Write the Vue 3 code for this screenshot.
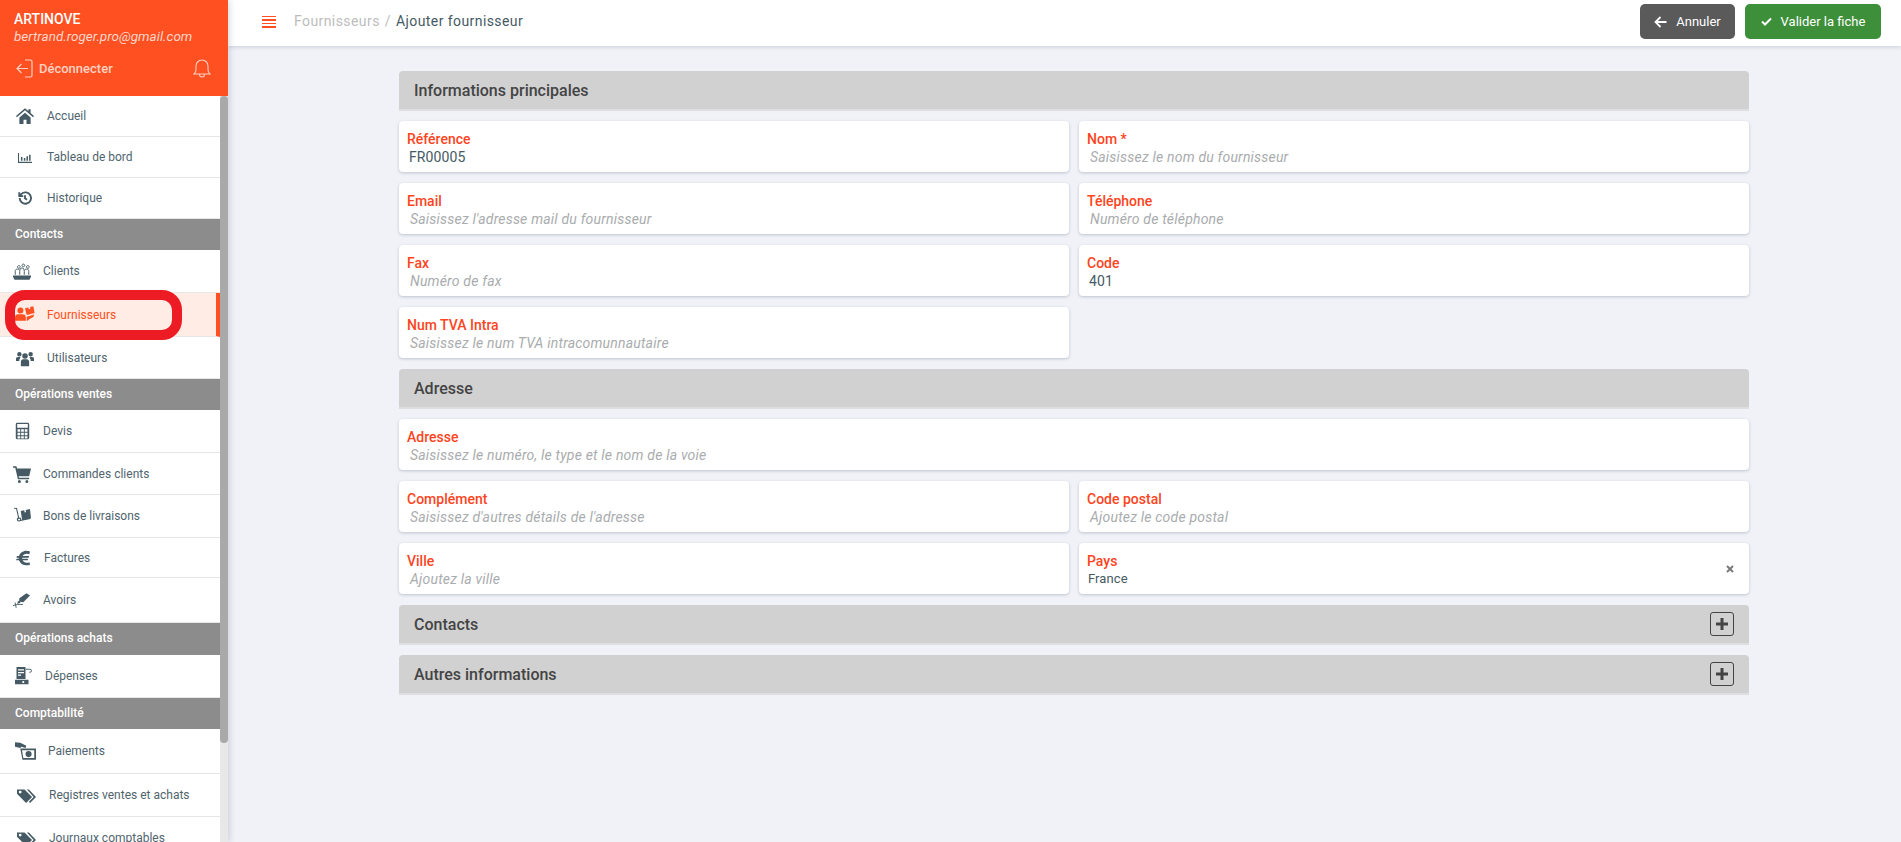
<script setup>
// icon shapes: f = filled path, s = stroked path, w = stroke width
const icons = {
  home: { f: 'M12 1.500 0 12l1.200 1.500L12 4.200l10.800 9.300L24 12l-4.500-4V3h-3v2.400zM4.500 14 12 7.500l7.500 6.500v8.500H14V17h-4v5.500H4.500z' },
  chart: { f: 'M0 5h1.800v15H24v2.200H0zM5 12h2.600v6.500H5zM10 13.500h2.600v5H10zM14.500 10.500h2.600v8h-2.600zM19 8h2.600v10.500H19z' },
  history: { s: 'M4 12a8.500 8.500 0 1 0 2.700-6.200L3.800 8.700M3.400 3.200v6H9.400M12 8v4.500l3 2', w: 2.800 },
  clients: { f: 'M0 18h24v1.500l-2 4H2l-2-4z', s: 'M6 6.500a1.800 1.800 0 1 1 0 .1zM12 4.500a1.800 1.800 0 1 1 0 .1zM18 6.500a1.800 1.800 0 1 1 0 .1zM3 17v-4.500c0-2 1-3 3-3s3 1 3 3V17M9.500 11c0-2 .5-3 2.500-3s2.500 1 2.500 3M15 17v-4.500c0-2 1-3 3-3s3 1 3 3V17', w: 1.300 },
  supplier: { f: 'M6.500 3a3.600 3.600 0 1 1 0 7.200 3.600 3.600 0 0 1 0-7.200zM0 19v-4a4 4 0 0 1 4-4h5a4 4 0 0 1 4 4v4zM12 4l4-1 .5 2 2-.5-.5-2 4-1 1.500 8-9.500 2.500zM14 14l9-2.500-1 3-5 2.500-2 2h-1z' },
  users: { f: 'M12 5.500a3.700 3.700 0 1 1 0 7.400 3.700 3.700 0 0 1 0-7.400zM4.500 4a3 3 0 1 1 0 6 3 3 0 0 1 0-6zM19.500 4a3 3 0 1 1 0 6 3 3 0 0 1 0-6zM6.500 23v-6c0-2 1.500-3.500 3-3.500h5c1.500 0 3 1.500 3 3.500v6zM0 16v-3c0-1.500 1-2.500 2.500-2.500H6c-.5 1-.5 2-1.500 3.500L4.500 16zM24 16v-3c0-1.500-1-2.500-2.500-2.500H18c.5 1 .5 2 1.500 3.500l0 2z' },
  calc: { f: 'M5 0h14a2.500 2.500 0 0 1 2.500 2.500v19A2.500 2.500 0 0 1 19 24H5a2.500 2.500 0 0 1-2.500-2.500v-19A2.500 2.500 0 0 1 5 0zm-.5 2v5.500h15V2zM5 9.500v3.500h3.800V9.500zm5.100 0v3.500h3.800V9.500zm5.100 0v3.500H19V9.500zM5 14.500V18h3.800v-3.500zm5.100 0V18h3.800v-3.500zm5.100 0V18H19v-3.500zM5 19.500V22.500h3.800v-3zm5.100 0v3h3.800v-3zm5.100 0v3H19v-3z' },
  cart: { f: 'M0 1.500h4.500l1 3H24l-2.500 10.500H7.500l.5 2h13.500v2H6.500L3 3.500H0zM8.500 20a2 2 0 1 1 0 4 2 2 0 0 1 0-4zM18.500 20a2 2 0 1 1 0 4 2 2 0 0 1 0-4z' },
  truck: { f: 'M9.500 5l5-1 .5 3 2-.5-.5-3 6-1.500 1.500 13-12.500 3z', s: 'M0 1h3.500l3.500 15.500M7 19a2.300 2.300 0 1 1 .1 0zM9 18.500 23 15.500', w: 1.500 },
  euro: { f: 'M17.500 1C11.500 1 7.500 4.500 6 9H3L2 11.500h3.500v1.500H2.500l-1 2.500H6c1.500 4.500 5.500 7.500 11.500 7.500 2 0 3.500-.3 5-.8l-.8-4c-1.200.5-2.500.8-4.200.8-2.800 0-5-1.300-6.200-3.500H19l.8-2.500H10.800v-1.500H20.500l.8-2.500h-10c1.100-2 3.300-3.500 6.200-3.500 1.500 0 3 .3 4 .8l1-4c-1.500-.6-3.200-.8-5-.8z' },
  pen: { f: 'M9 9.500 19 2.500l5 3-9.500 9.500-6-1zM7 13l4 2.500-5 2z', s: 'M0 20c4-2 9-2 14-1.500M3 15.500l1.500 7.500', w: 1.300 },
  register: { f: 'M2 0h12v16H2zM4 3v1.800h8V3zm0 3.500V8.300h8V6.500zm0 3.500v1.800h4V10zM0 17h18v6H0zm11 1.500a1.500 1.500 0 1 0 0 3 1.500 1.500 0 0 0 0-3z', s: 'M14 3h6a2 2 0 0 1 0 4h-1', w: 1.200 },
  pay: { f: 'M0 2l6 .5 7 3.500-1 2.500-5-1.500-1 1.500-6-1.500zM6 9h18v13H8.500zm2 2 1.500 9H22v-9zm7.500 1a3.500 3.500 0 1 1 0 7 3.500 3.500 0 0 1 0-7z' },
  tags: { f: 'M0 5h9.500L19 14.500 11.500 22 0 10.500zm4 1.500a1.800 1.800 0 1 0 0 3.600 1.800 1.800 0 0 0 0-3.600zM12.500 5h2.500L24 14.500 16.500 22 15 20.500l6-6z' },
}

const menu = [
  { label: 'Accueil', icon: 'home', h: 41, ix: 16, iw: 18, tx: 47 },
  { label: 'Tableau de bord', icon: 'chart', h: 41, ix: 18, iw: 14, tx: 47 },
  { label: 'Historique', icon: 'history', h: 41, ix: 17, iw: 16, tx: 47 },
  { section: 'Contacts', h: 31 },
  { label: 'Clients', icon: 'clients', h: 43, ix: 13, iw: 18, tx: 43 },
  { label: 'Fournisseurs', icon: 'supplier', h: 44, ix: 15, iw: 20, tx: 47, active: true },
  { label: 'Utilisateurs', icon: 'users', h: 42, ix: 16, iw: 18, tx: 47 },
  { section: 'Opérations ventes', h: 31 },
  { label: 'Devis', icon: 'calc', h: 43, ix: 14, iw: 17, tx: 43 },
  { label: 'Commandes clients', icon: 'cart', h: 42, ix: 13, iw: 18, tx: 43 },
  { label: 'Bons de livraisons', icon: 'truck', h: 43, ix: 14, iw: 17, tx: 43 },
  { label: 'Factures', icon: 'euro', h: 40, ix: 15, iw: 16, tx: 44 },
  { label: 'Avoirs', icon: 'pen', h: 45, ix: 13, iw: 17, tx: 43 },
  { section: 'Opérations achats', h: 32 },
  { label: 'Dépenses', icon: 'register', h: 43, ix: 15, iw: 18, tx: 45 },
  { section: 'Comptabilité', h: 31 },
  { label: 'Paiements', icon: 'pay', h: 45, ix: 15, iw: 21, tx: 48 },
  { label: 'Registres ventes et achats', icon: 'tags', h: 43, ix: 17, iw: 19, tx: 49 },
  { label: 'Journaux comptables', icon: 'tags', h: 43, ix: 17, iw: 19, tx: 49 },
]

const mainFields = [
  { label: 'Référence', value: 'FR00005' },
  { label: 'Nom *', hint: 'Saisissez le nom du fournisseur' },
  { label: 'Email', hint: "Saisissez l'adresse mail du fournisseur" },
  { label: 'Téléphone', hint: 'Numéro de téléphone' },
  { label: 'Fax', hint: 'Numéro de fax' },
  { label: 'Code', value: '401' },
  { label: 'Num TVA Intra', hint: 'Saisissez le num TVA intracomunnautaire' },
]

const addressFields = [
  { label: 'Adresse', hint: 'Saisissez le numéro, le type et le nom de la voie', wide: true },
  { label: 'Complément', hint: "Saisissez d'autres détails de l'adresse" },
  { label: 'Code postal', hint: 'Ajoutez le code postal' },
  { label: 'Ville', hint: 'Ajoutez la ville' },
  { label: 'Pays', value: 'France', select: true },
]
</script>

<template>
  <div class="app">
    <aside class="sidebar">
      <div class="account">
        <div class="company">ARTINOVE</div>
        <div class="email">bertrand.roger.pro@gmail.com</div>
        <div class="account-actions">
          <a class="logout">
            <svg width="17" height="19" viewBox="0 0 17 19" fill="none" stroke="currentColor" stroke-width="1.2">
              <path d="M9 1h5.500a1.500 1.500 0 0 1 1.500 1.500v14a1.500 1.500 0 0 1-1.500 1.500H9M12 9.500H1M5.500 5 1 9.500 5.500 14" />
            </svg>
            <span>Déconnecter</span>
          </a>
          <svg class="bell" width="18" height="19" viewBox="0 0 18 19" fill="none" stroke="currentColor" stroke-width="1.100">
            <path d="M1 15c1.500-1 2-2.500 2-4.500V7a6 6 0 0 1 12 0v3.500c0 2 .5 3.500 2 4.500zM6.500 15.500a2.500 2.500 0 0 0 5 0" />
          </svg>
        </div>
      </div>
      <div class="menu-wrap">
        <nav class="menu">
          <template v-for="item in menu" :key="item.label || item.section">
            <div v-if="item.section" class="section" :style="{ height: item.h + 'px' }">{{ item.section }}</div>
            <a v-else class="row" :class="{ active: item.active }" :style="{ height: item.h + 'px' }">
              <svg class="row-icon" :style="{ left: item.ix + 'px', width: item.iw + 'px', height: item.iw + 'px' }" viewBox="0 0 24 24">
                <path v-if="icons[item.icon].f" :d="icons[item.icon].f" fill="currentColor" />
                <path v-if="icons[item.icon].s" :d="icons[item.icon].s" fill="none" stroke="currentColor" :stroke-width="icons[item.icon].w" />
              </svg>
              <span :style="{ marginLeft: item.tx + 'px' }">{{ item.label }}</span>
            </a>
          </template>
        </nav>
        <div class="scrollbar"><div class="thumb"></div></div>
      </div>
      <div class="circled"></div>
    </aside>

    <div class="main">
      <header class="topbar">
        <div class="burger"><i></i><i></i><i></i><i></i></div>
        <div class="crumbs">
          <span class="crumb-parent">Fournisseurs</span>
          <span class="crumb-sep">/</span>
          <span class="crumb-current">Ajouter fournisseur</span>
        </div>
        <div class="actions">
          <button class="btn btn-cancel">
            <svg width="13" height="12" viewBox="0 0 13 12" fill="none" stroke="currentColor" stroke-width="1.800">
              <path d="M12.500 6H2M6.500 1 1.500 6l5 5" />
            </svg>
            Annuler
          </button>
          <button class="btn btn-save">
            <svg width="11" height="9" viewBox="0 0 11 9" fill="none" stroke="currentColor" stroke-width="2">
              <path d="M1 4.500 4 7.500 10 1.500" />
            </svg>
            Valider la fiche
          </button>
        </div>
      </header>

      <main class="content">
        <div class="panel-title">Informations principales</div>
        <div class="fields">
          <div v-for="f in mainFields" :key="f.label" class="field">
            <label>{{ f.label }}</label>
            <div v-if="f.value" class="value">{{ f.value }}</div>
            <div v-else class="hint">{{ f.hint }}</div>
          </div>
        </div>

        <div class="panel-title">Adresse</div>
        <div class="fields">
          <div v-for="f in addressFields" :key="f.label" class="field" :class="{ wide: f.wide, select: f.select }">
            <label>{{ f.label }}</label>
            <div v-if="f.value" class="value">{{ f.value }}</div>
            <div v-else class="hint">{{ f.hint }}</div>
            <svg v-if="f.select" class="clear" width="8" height="8" viewBox="0 0 8 8" stroke="currentColor" stroke-width="2">
              <path d="M1 1l6 6M7 1 1 7" />
            </svg>
          </div>
        </div>

        <div class="panel-title collapsed">
          Contacts
          <span class="plus"><svg width="14" height="14" viewBox="0 0 14 14" stroke="currentColor" stroke-width="3"><path d="M7 1v12M1 7h12" /></svg></span>
        </div>
        <div class="panel-title collapsed">
          Autres informations
          <span class="plus"><svg width="14" height="14" viewBox="0 0 14 14" stroke="currentColor" stroke-width="3"><path d="M7 1v12M1 7h12" /></svg></span>
        </div>
      </main>
    </div>
  </div>
</template>

<style>
body {
  background: #f0f2f8;
  overflow: hidden;
}
</style>

<style scoped>
.app {
  display: flex;
  height: 842px;
  overflow: hidden;
  font-family: Roboto, "Liberation Sans", sans-serif;
  font-size: 14px;
  color: #455a64;
}

.sidebar {
  position: relative;
  z-index: 3;
  flex: 0 0 228px;
  display: flex;
  flex-direction: column;
  background: #fff;
  box-shadow: 2px 0 6px rgba(40, 50, 80, 0.16);
}

.account {
  flex: 0 0 96px;
  box-sizing: border-box;
  padding: 11px 17px 0 14px;
  background: #ff5022;
  color: #fff;
}

.company {
  font-weight: 500;
  line-height: 16px;
}

.email {
  line-height: 18px;
  font-size: 13.500px;
  font-style: italic;
  color: #ffd6c9;
}

.account-actions {
  display: flex;
  align-items: center;
  justify-content: space-between;
  margin-top: 14px;
  color: #ffd0c2;
}

.logout {
  display: flex;
  align-items: center;
  gap: 6px;
  padding-left: 2px;
  font-size: 13px;
  font-weight: 500;
}

.menu-wrap {
  flex: 1;
  display: flex;
  min-height: 0;
}

.menu {
  flex: 1;
  overflow: hidden;
}

.scrollbar {
  flex: 0 0 8px;
  background: #e8e8e8;
}

.thumb {
  height: 647px;
  border-radius: 4px;
  background: #a9a9a9;
}

.section {
  box-sizing: border-box;
  display: flex;
  align-items: center;
  padding: 0 0 2px 15px;
  background: #8c8c8c;
  color: #fff;
  font-size: 12px;
  font-weight: 500;
}

.row {
  position: relative;
  box-sizing: border-box;
  display: flex;
  align-items: center;
  border-bottom: 1px solid #e6e6e6;
  font-size: 12px;
  color: #50646e;
}

.row-icon {
  position: absolute;
  top: 50%;
  transform: translateY(-50%);
  color: #455a64;
}

.row.active {
  background: #ffece5;
  border-right: 4px solid #ff5022;
  color: #ff5022;
}

.row.active .row-icon {
  color: #ff5022;
}

/* red marker drawn over the screenshot */
.circled {
  position: absolute;
  left: 5px;
  top: 290px;
  width: 177px;
  height: 50px;
  box-sizing: border-box;
  border: 10px solid #ed1c24;
  border-radius: 20px;
}

.main {
  flex: 1;
  min-width: 0;
  display: flex;
  flex-direction: column;
}

.topbar {
  flex: 0 0 46px;
  box-sizing: border-box;
  display: flex;
  align-items: center;
  padding: 0 20px 3px 34px;
  background: #fff;
  box-shadow: 0 1px 4px rgba(40, 50, 80, 0.18);
}

.burger {
  display: flex;
  flex-direction: column;
  gap: 2px;
  width: 14px;
}

.burger i {
  height: 1.500px;
  background: #ff5022;
}

.crumbs {
  display: flex;
  gap: 5px;
  margin: 0 0 1px 18px;
  letter-spacing: 0.42px;
}

.crumb-parent,
.crumb-sep {
  color: #bdbdbd;
}

.crumb-current {
  color: #455a64;
}

.actions {
  display: flex;
  gap: 10px;
  margin-left: auto;
}

.btn {
  display: flex;
  align-items: center;
  justify-content: center;
  gap: 9px;
  height: 35px;
  border: 0;
  border-radius: 5px;
  color: #fff;
  font-family: inherit;
  font-size: 13px;
}

.btn-cancel {
  width: 95px;
  background: #5a5a5a;
}

.btn-save {
  width: 136px;
  background: #3d8f3a;
}

.content {
  padding: 25px 152px 0 171px;
}

.panel-title {
  box-sizing: border-box;
  display: flex;
  align-items: center;
  justify-content: space-between;
  height: 40px;
  margin-bottom: 10px;
  padding: 0 9px 0 15px;
  padding-right: 15px;
  border-bottom: 2px solid #dedede;
  border-radius: 4px 4px 0 0;
  background: #d1d1d1;
  color: #444;
  font-size: 16px;
  font-weight: 500;
}

.plus {
  display: flex;
  align-items: center;
  justify-content: center;
  width: 24px;
  height: 24px;
  box-sizing: border-box;
  border: 1px solid #444;
  border-radius: 3px;
  color: #444;
}

.fields {
  display: grid;
  grid-template-columns: 1fr 1fr;
  gap: 11px 10px;
  margin-bottom: 11px;
}

.field {
  position: relative;
  box-sizing: border-box;
  height: 51px;
  padding: 9px 8px 0;
  border-radius: 4px;
  background: #fff;
  box-shadow: 0 1px 3px rgba(40, 50, 80, 0.25);
}

.field.wide {
  grid-column: 1 / -1;
}

.field label {
  display: block;
  line-height: 18px;
  color: #ff4422;
  font-weight: 500;
}

.value {
  padding-left: 2px;
  line-height: 18px;
  letter-spacing: 0.1px;
  color: #455a64;
}

.select .value {
  padding-left: 1px;
  font-size: 13px;
}

.hint {
  padding-left: 3px;
  line-height: 18px;
  font-style: italic;
  letter-spacing: 0.2px;
  color: #a9acae;
}

.clear {
  position: absolute;
  right: 15px;
  top: 22px;
  color: #7a7a7a;
}
</style>
